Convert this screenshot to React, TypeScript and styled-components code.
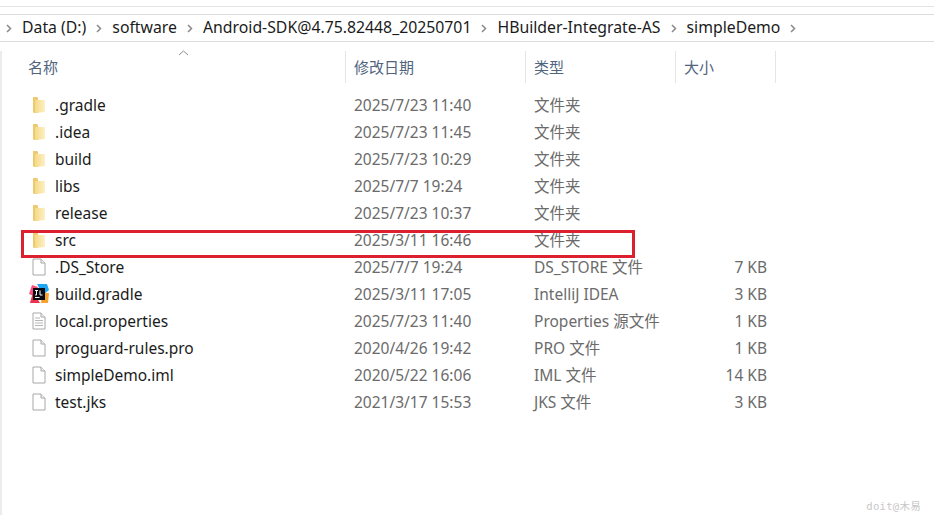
import React from "react";
import styled, { createGlobalStyle } from "styled-components";

const Global = createGlobalStyle`
  html, body { margin: 0; padding: 0; background: #fff; }
  body { width: 934px; height: 515px; overflow: hidden; font-family: "Noto Sans", "Noto Sans CJK SC", sans-serif; }
`;

const Page = styled.div`
  position: relative;
  width: 934px;
  height: 515px;
  background: #fff;
  overflow: hidden;
  padding-top: 6px;
  box-sizing: border-box;
`;
const TopStrip = styled.div`
  height: 7px;
  border-top: 1px solid #e4e4e4;
`;
const AddressBar = styled.div`
  height: 26px;
  display: flex;
  align-items: center;
  border-top: 1px solid #dcdcdc;
  border-bottom: 1px solid #dcdcdc;
  padding-left: 6px;
  color: #1b1b1b;
  font-size: 15.8px;
`;
const Crumb = styled.span`
  margin: 0 10px;
  white-space: nowrap;
  position: relative;
  top: -1px;
`;
const Chevron = () => (
  <svg width="6" height="9" viewBox="0 0 6 9" style={{ flex: "none" }}>
    <path d="M1 1l3.5 3.5L1 8" fill="none" stroke="#8a8a8a" strokeWidth="1.5" />
  </svg>
);
const Body = styled.div`
  display: flex;
  height: 473px;
`;
const Gutter = styled.div`
  width: 2px;
  margin-top: 9px;
  background: #ececec;
  flex: none;
`;
const List = styled.div`
  flex: 1;
  padding-left: 18px;
`;
const Header = styled.div`
  position: relative;
  display: grid;
  grid-template-columns: 326px 180px 150px 100px;
  height: 32px;
  margin-top: 9px;
  margin-bottom: 8px;
`;
const HeadCell = styled.div`
  display: flex;
  align-items: center;
  padding: 0 0 2px 8px;
  border-right: 1px solid #e5e5e5;
  color: #50647e;
  font-size: 15px;
  font-family: "Noto Sans CJK SC", sans-serif;
`;
const SortArrow = styled.svg`
  position: absolute;
  left: 158px;
  top: -1px;
`;
const Row = styled.div`
  display: grid;
  grid-template-columns: 326px 180px 142px 99px;
  height: 27px;
  align-items: center;
  font-size: 15.5px;
`;
const NameCell = styled.div`
  display: flex;
  align-items: center;
  color: #1b1b1b;
  padding-left: 9px;
  gap: 6px;
  white-space: nowrap;
`;
const IconBox = styled.span`
  width: 20px;
  height: 20px;
  flex: none;
  display: flex;
  align-items: center;
  justify-content: center;
`;
const DateCell = styled.div`
  color: #6b6b6b;
  padding-left: 8px;
`;
const TypeCell = styled.div`
  color: #6b6b6b;
  padding-left: 8px;
  white-space: nowrap;
`;
const SizeCell = styled.div`
  color: #6b6b6b;
  text-align: right;
  white-space: nowrap;
`;
const Highlight = styled.div`
  position: absolute;
  left: 21px;
  top: 230px;
  width: 614px;
  height: 28px;
  box-sizing: border-box;
  border: 3px solid #dd2030;
  pointer-events: none;
`;
const Watermark = styled.div`
  position: absolute;
  right: 13px;
  top: 498px;
  font-family: "DejaVu Sans Mono", "Noto Sans CJK SC", monospace;
  font-size: 10.5px;
  letter-spacing: 0.3px;
  color: #c8c8c8;
`;

const Folder = () => (
  <svg width="16" height="18" viewBox="0 0 16 18">
    <defs>
      <linearGradient id="fg" x1="0" x2="1" y1="0" y2="0">
        <stop offset="0" stopColor="#f5d986" />
        <stop offset="1" stopColor="#fdf0c6" />
      </linearGradient>
    </defs>
    <path d="M2 1h4l1 1v15H3l-1-1z" fill="#edca70" />
    <path d="M4 4l10 0v12l-10 1z" fill="url(#fg)" />
  </svg>
);
const Blank = ({ lines }: { lines?: boolean }) => (
  <svg width="16" height="18" viewBox="0 0 16 18">
    <path d="M2 1h8l4 4v12H2z" fill="#fff" stroke="#a8a8a8" />
    <path d="M10 1v4h4" fill="#f1f1f1" stroke="#a8a8a8" />
    {lines && <path d="M4 6h5M4 8.5h8M4 11h8M4 13.5h8" stroke="#b5b5b5" />}
  </svg>
);
const Idea = () => (
  <svg width="20" height="20" viewBox="0 0 20 20">
    <path d="M0 10l3-9 6 2-4 9z" fill="#fc4f80" />
    <path d="M1 19l3-11 7 11z" fill="#f0304f" />
    <path d="M8 0h10l2 6-6 5z" fill="#1fa6f2" />
    <path d="M13 9l7 0-1 10h-7z" fill="#f7a42e" />
    <rect x="4" y="4" width="12" height="12" fill="#0a0a12" />
    <path d="M6 13.5h4.5" stroke="#fff" strokeWidth="1" />
    <path d="M6 6.5h3M7.5 6.5v4.5h-1.500M11 6.500v4.500h2.500" stroke="#fff" strokeWidth="1" fill="none" />
  </svg>
);

type Entry = { name: string; date: string; type: string; size?: string; icon: React.ReactNode };
const entries: Entry[] = [
  { name: ".gradle", date: "2025/7/23 11:40", type: "文件夹", icon: <Folder /> },
  { name: ".idea", date: "2025/7/23 11:45", type: "文件夹", icon: <Folder /> },
  { name: "build", date: "2025/7/23 10:29", type: "文件夹", icon: <Folder /> },
  { name: "libs", date: "2025/7/7 19:24", type: "文件夹", icon: <Folder /> },
  { name: "release", date: "2025/7/23 10:37", type: "文件夹", icon: <Folder /> },
  { name: "src", date: "2025/3/11 16:46", type: "文件夹", icon: <Folder /> },
  { name: ".DS_Store", date: "2025/7/7 19:24", type: "DS_STORE 文件", size: "7 KB", icon: <Blank /> },
  { name: "build.gradle", date: "2025/3/11 17:05", type: "IntelliJ IDEA", size: "3 KB", icon: <Idea /> },
  { name: "local.properties", date: "2025/7/23 11:40", type: "Properties 源文件", size: "1 KB", icon: <Blank lines /> },
  { name: "proguard-rules.pro", date: "2020/4/26 19:42", type: "PRO 文件", size: "1 KB", icon: <Blank /> },
  { name: "simpleDemo.iml", date: "2020/5/22 16:06", type: "IML 文件", size: "14 KB", icon: <Blank /> },
  { name: "test.jks", date: "2021/3/17 15:53", type: "JKS 文件", size: "3 KB", icon: <Blank /> },
];
const crumbs = ["Data (D:)", "software", "Android-SDK@4.75.82448_20250701", "HBuilder-Integrate-AS", "simpleDemo"];

export default function App() {
  return (
    <Page>
      <Global />
      <TopStrip />
      <AddressBar>
        {crumbs.map((c) => (
          <React.Fragment key={c}>
            <Chevron />
            <Crumb>{c}</Crumb>
          </React.Fragment>
        ))}
        <Chevron />
      </AddressBar>
      <Body>
        <Gutter />
        <List>
          <Header>
            <HeadCell>名称</HeadCell>
            <HeadCell>修改日期</HeadCell>
            <HeadCell>类型</HeadCell>
            <HeadCell>大小</HeadCell>
            <SortArrow width="11" height="6" viewBox="0 0 11 6">
              <path d="M1 5l4.5-4L10 5" fill="none" stroke="#8a8a8a" />
            </SortArrow>
          </Header>
          {entries.map((e) => (
            <Row key={e.name}>
              <NameCell>
                <IconBox>{e.icon}</IconBox>
                {e.name}
              </NameCell>
              <DateCell>{e.date}</DateCell>
              <TypeCell>{e.type}</TypeCell>
              <SizeCell>{e.size}</SizeCell>
            </Row>
          ))}
        </List>
      </Body>
      <Highlight />
      <Watermark>doit@木易</Watermark>
    </Page>
  );
}
